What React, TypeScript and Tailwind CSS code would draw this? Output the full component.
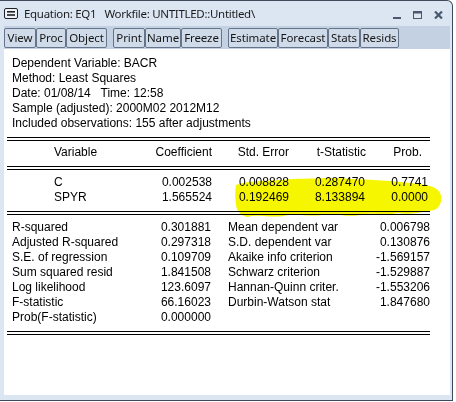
import React from "react";

const btnGroups: { label: string; w: string }[][] = [
  [
    { label: "View", w: "w-[32px]" },
    { label: "Proc", w: "w-[30px]" },
    { label: "Object", w: "w-[41px]" },
  ],
  [
    { label: "Print", w: "w-[32px]" },
    { label: "Name", w: "w-[36px]" },
    { label: "Freeze", w: "w-[41px]" },
  ],
  [
    { label: "Estimate", w: "w-[50px]" },
    { label: "Forecast", w: "w-[50px]" },
    { label: "Stats", w: "w-[32px]" },
    { label: "Resids", w: "w-[39px]" },
  ],
];

const stats: [string, string, string, string][] = [
  ["R-squared", "0.301881", "Mean dependent var", "0.006798"],
  ["Adjusted R-squared", "0.297318", "S.D. dependent var", "0.130876"],
  ["S.E. of regression", "0.109709", "Akaike info criterion", "-1.569157"],
  ["Sum squared resid", "1.841508", "Schwarz criterion", "-1.529887"],
  ["Log likelihood", "123.6097", "Hannan-Quinn criter.", "-1.553206"],
  ["F-statistic", "66.16023", "Durbin-Watson stat", "1.847680"],
  ["Prob(F-statistic)", "0.000000", "", ""],
];

function DoubleLine({ className = "" }: { className?: string }) {
  return <div className={`h-[4px] border-t border-b border-black ${className}`} />;
}

export default function App() {
  return (
    <div className="relative w-[456px] h-[402px] overflow-hidden bg-white">
      <div className="w-[453px] h-[401px] flex flex-col bg-[#dce6f3] border-t border-r border-b border-[#3e4b5c] rounded-tr-[6px]">
        {/* Title bar */}
        <div className="h-[25px] flex items-center pl-[4px] pr-[9px]" style={{ fontFamily: "'Noto Sans', sans-serif" }}>
          <svg width="14" height="11" viewBox="0 0 14 11" className="shrink-0">
            <rect x="0.5" y="0.5" width="13" height="10" rx="1.5" fill="#eef2f8" stroke="#222" />
            <rect x="3" y="3" width="8" height="1.6" fill="#222" />
            <rect x="3" y="6.2" width="8" height="1.6" fill="#222" />
          </svg>
          <span className="ml-[6px] text-[11.5px] text-[#1b1b1b] whitespace-pre tracking-[-0.3px]">
            {"Equation: EQ1   Workfile: UNTITLED::Untitled\\"}
          </span>
          <div className="ml-auto flex items-center gap-[12px] mt-[2px]">
            <svg width="8" height="8" viewBox="0 0 8 8">
              <rect x="0" y="6" width="8" height="2" fill="#4a596d" />
            </svg>
            <svg width="9" height="8" viewBox="0 0 9 8">
              <rect x="0.5" y="0.5" width="8" height="7" fill="none" stroke="#4a596d" />
              <rect x="0" y="0" width="9" height="2.5" fill="#4a596d" />
            </svg>
            <svg width="9" height="8" viewBox="0 0 9 8">
              <path d="M1 0.5 L8 7.5 M8 0.5 L1 7.5" stroke="#4a596d" strokeWidth="2.2" />
            </svg>
          </div>
        </div>

        {/* Toolbar */}
        <div
          className="ml-[4px] mr-[2px] h-[23px] flex items-center bg-[#c4d1e3] gap-[6px]"
          style={{ fontFamily: "'Noto Sans', sans-serif" }}
        >
          {btnGroups.map((g, gi) => (
            <div key={gi} className="flex">
              {g.map((b) => (
                <div
                  key={b.label}
                  className={`${b.w} h-[20px] flex items-center justify-center border border-[#65748a] rounded-[2px] bg-[#d0dbea] text-[11.5px] tracking-[-0.1px] text-[#151515] leading-none`}
                >
                  {b.label}
                </div>
              ))}
            </div>
          ))}
        </div>

        {/* Content */}
        <div
          className="ml-[4px] mr-[2px] h-[346px] bg-white text-[12px] leading-[15px] text-black"
          style={{ fontFamily: "'Liberation Sans', Arial, sans-serif" }}
        >
          <div className="pl-[3px] pt-[7px] w-[426px]">
            <div className="pl-[5px]">
              <div>Dependent Variable: BACR</div>
              <div>Method: Least Squares</div>
              <div className="whitespace-pre">{"Date: 01/08/14   Time: 12:58"}</div>
              <div>Sample (adjusted): 2000M02 2012M12</div>
              <div>Included observations: 155 after adjustments</div>
            </div>

            <DoubleLine className="mt-[6px] w-[423px]" />

            {/* header */}
            <div className="grid grid-cols-[113px_92px_77px_77px_62px] pt-[4px] h-[25px]">
              <div className="pl-[47px]">Variable</div>
              <div className="text-right">Coefficient</div>
              <div className="text-right">Std. Error</div>
              <div className="text-right">t-Statistic</div>
              <div className="text-right pr-[6px]">Prob.</div>
            </div>

            <DoubleLine className="w-[423px]" />

            <div className="pt-[5px]">
              <div className="grid grid-cols-[113px_92px_77px_76px_63px]">
                <div className="pl-[47px]">C</div>
                <div className="text-right">0.002538</div>
                <div className="text-right">0.008828</div>
                <div className="text-right">0.287470</div>
                <div className="text-right">0.7741</div>
              </div>
              <div className="grid grid-cols-[113px_92px_77px_76px_63px]">
                <div className="pl-[47px]">SPYR</div>
                <div className="text-right">1.565524</div>
                <div className="text-right">0.192469</div>
                <div className="text-right">8.133894</div>
                <div className="text-right">0.0000</div>
              </div>
            </div>

            <DoubleLine className="mt-[6px] w-[423px]" />

            <div className="pt-[5px]">
              {stats.map((r) => (
                <div key={r[0]} className="grid grid-cols-[143px_61px_157px_62px] whitespace-pre">
                  <div className="pl-[5px]">{r[0]}</div>
                  <div className="text-right">{r[1]}</div>
                  <div className="pl-[17px]">{r[2]}</div>
                  <div className="text-right">{r[3]}</div>
                </div>
              ))}
            </div>

            <DoubleLine className="mt-[6px] w-[423px]" />
          </div>
        </div>
      </div>

      {/* Yellow highlighter stroke */}
      <svg
        className="absolute left-0 top-0 pointer-events-none mix-blend-multiply"
        width="456"
        height="402"
        viewBox="0 0 456 402"
      >
        <path
          d="M236,185 C245,181 262,181 280,180 C298,178 312,179 325,178 C345,178 368,180 390,181 C410,183 425,184 433,187 C440,190 442,195 441,201 C440,207 436,211 428,211 C418,213 408,215 398,213 C385,216 372,212 360,215 C346,218 335,212 322,215 C308,217 296,213 284,216 C270,218 258,214 248,217 C241,216 237,212 236,205 C235,198 235,191 236,185 Z"
          fill="#f6f600"
        />
      </svg>
    </div>
  );
}
